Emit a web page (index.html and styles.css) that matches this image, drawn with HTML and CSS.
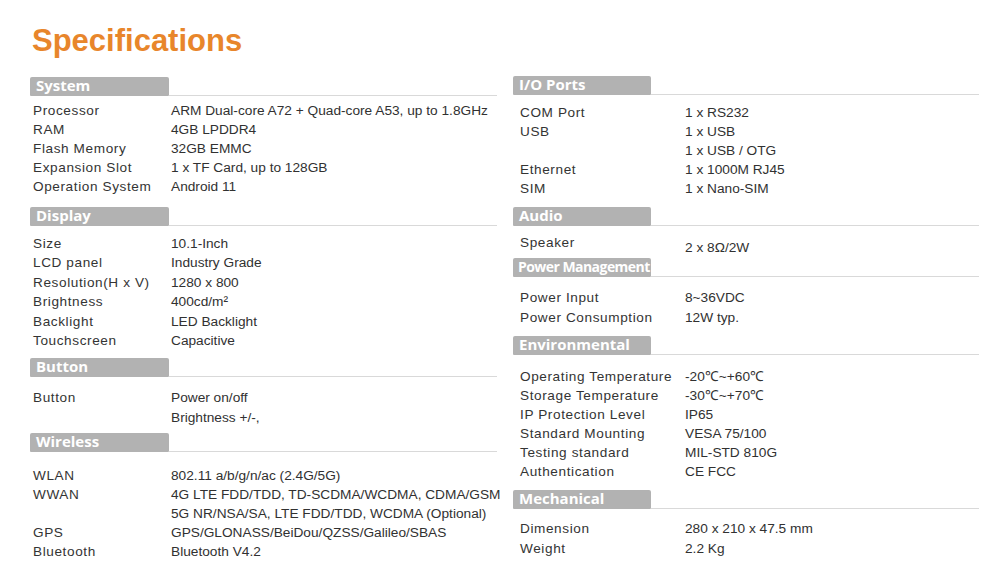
FILE: index.html
```html
<!DOCTYPE html>
<html lang="en">
<head>
<meta charset="utf-8">
<title>Specifications</title>
<link rel="stylesheet" href="styles.css">
</head>
<body>
<main class="page">
  <h1 class="title">Specifications</h1>
  <div class="cols">
    <div class="col col-left">
      <section class="sec s-system">
        <div class="sec-head"><span class="tag">System</span><span class="rule"></span></div>
        <div class="rows">
          <div class="row"><span class="lbl">Processor</span><span class="val">ARM Dual-core A72 + Quad-core A53, up to 1.8GHz</span></div>
          <div class="row"><span class="lbl">RAM</span><span class="val">4GB LPDDR4</span></div>
          <div class="row"><span class="lbl">Flash Memory</span><span class="val">32GB EMMC</span></div>
          <div class="row"><span class="lbl">Expansion Slot</span><span class="val">1 x TF Card, up to 128GB</span></div>
          <div class="row"><span class="lbl">Operation System</span><span class="val">Android 11</span></div>
        </div>
      </section>
      <section class="sec s-display">
        <div class="sec-head"><span class="tag">Display</span><span class="rule"></span></div>
        <div class="rows">
          <div class="row"><span class="lbl">Size</span><span class="val">10.1-Inch</span></div>
          <div class="row"><span class="lbl">LCD panel</span><span class="val">Industry Grade</span></div>
          <div class="row"><span class="lbl">Resolution(H x V)</span><span class="val">1280 x 800</span></div>
          <div class="row"><span class="lbl">Brightness</span><span class="val">400cd/m²</span></div>
          <div class="row"><span class="lbl">Backlight</span><span class="val">LED Backlight</span></div>
          <div class="row"><span class="lbl">Touchscreen</span><span class="val">Capacitive</span></div>
        </div>
      </section>
      <section class="sec s-button">
        <div class="sec-head"><span class="tag">Button</span><span class="rule"></span></div>
        <div class="rows">
          <div class="row"><span class="lbl">Button</span><span class="val">Power on/off</span></div>
          <div class="row"><span class="lbl"></span><span class="val">Brightness +/-,</span></div>
        </div>
      </section>
      <section class="sec s-wireless">
        <div class="sec-head"><span class="tag">Wireless</span><span class="rule"></span></div>
        <div class="rows">
          <div class="row"><span class="lbl">WLAN</span><span class="val">802.11 a/b/g/n/ac (2.4G/5G)</span></div>
          <div class="row"><span class="lbl">WWAN</span><span class="val">4G LTE FDD/TDD, TD-SCDMA/WCDMA, CDMA/GSM</span></div>
          <div class="row"><span class="lbl"></span><span class="val">5G NR/NSA/SA, LTE FDD/TDD, WCDMA (Optional)</span></div>
          <div class="row"><span class="lbl">GPS</span><span class="val">GPS/GLONASS/BeiDou/QZSS/Galileo/SBAS</span></div>
          <div class="row"><span class="lbl">Bluetooth</span><span class="val">Bluetooth V4.2</span></div>
        </div>
      </section>
    </div>
    <div class="col col-right">
      <section class="sec s-io">
        <div class="sec-head"><span class="tag">I/O Ports</span><span class="rule"></span></div>
        <div class="rows">
          <div class="row"><span class="lbl">COM Port</span><span class="val">1 x RS232</span></div>
          <div class="row"><span class="lbl">USB</span><span class="val">1 x USB</span></div>
          <div class="row"><span class="lbl"></span><span class="val">1 x USB / OTG</span></div>
          <div class="row"><span class="lbl">Ethernet</span><span class="val">1 x 1000M RJ45</span></div>
          <div class="row"><span class="lbl">SIM</span><span class="val">1 x Nano-SIM</span></div>
        </div>
      </section>
      <section class="sec s-audio">
        <div class="sec-head"><span class="tag">Audio</span><span class="rule"></span></div>
        <div class="rows">
          <div class="row"><span class="lbl">Speaker</span><span class="val val-low">2 x 8Ω/2W</span></div>
        </div>
      </section>
      <section class="sec s-power">
        <div class="sec-head"><span class="tag tag-tight">Power Management</span><span class="rule"></span></div>
        <div class="rows">
          <div class="row"><span class="lbl">Power Input</span><span class="val">8~36VDC</span></div>
          <div class="row"><span class="lbl">Power Consumption</span><span class="val">12W typ.</span></div>
        </div>
      </section>
      <section class="sec s-env">
        <div class="sec-head"><span class="tag">Environmental</span><span class="rule"></span></div>
        <div class="rows">
          <div class="row"><span class="lbl">Operating Temperature</span><span class="val">-20℃~+60℃</span></div>
          <div class="row"><span class="lbl">Storage Temperature</span><span class="val">-30℃~+70℃</span></div>
          <div class="row"><span class="lbl">IP Protection Level</span><span class="val">IP65</span></div>
          <div class="row"><span class="lbl">Standard Mounting</span><span class="val">VESA 75/100</span></div>
          <div class="row"><span class="lbl">Testing standard</span><span class="val">MIL-STD 810G</span></div>
          <div class="row"><span class="lbl">Authentication</span><span class="val">CE FCC</span></div>
        </div>
      </section>
      <section class="sec s-mech">
        <div class="sec-head"><span class="tag">Mechanical</span><span class="rule"></span></div>
        <div class="rows">
          <div class="row"><span class="lbl">Dimension</span><span class="val">280 x 210 x 47.5 mm</span></div>
          <div class="row"><span class="lbl">Weight</span><span class="val">2.2 Kg</span></div>
        </div>
      </section>
    </div>
  </div>
</main>
</body>
</html>
```
FILE: styles.css
```css
* { box-sizing: border-box; }
html, body { margin: 0; padding: 0; background: #ffffff; }
body { font-family: "Liberation Sans", Arial, sans-serif; color: #343434; }

.page { padding: 23px 0 0 30px; width: 1000px; height: 581px; overflow: hidden; }

.title {
  margin: 0 0 17px 2px;
  font-family: "Liberation Sans", Arial, sans-serif;
  font-weight: 700;
  font-size: 31px;
  line-height: 36px;
  color: #e8862b;
}

.cols { display: grid; grid-template-columns: 467px 466px; column-gap: 16px; align-items: start; }
.col-left { padding-top: 1px; }

.sec-head { display: flex; align-items: flex-end; height: 19px; }
.tag {
  flex: 0 0 139px;
  height: 19px;
  padding-left: 6px;
  background: #b2b2b2;
  border-radius: 2px 2px 1px 1px;
  color: #ffffff;
  font-family: "Open Sans", "Noto Sans", sans-serif;
  font-weight: 700;
  font-size: 15px;
  line-height: 17px;
  white-space: nowrap;
}
.col-right .tag { flex-basis: 138px; }
.tag-tight { font-size: 14px; letter-spacing: -0.55px; padding-left: 5px; line-height: 18px; }
.rule { flex: 1 1 auto; height: 1px; background: #d9d9d9; }

.rows { display: flex; flex-direction: column; }
.row { display: grid; grid-template-columns: 138px 1fr; line-height: 19px; font-size: 13.6px; }
.col-left .row { padding-left: 3px; }
.col-right .row { grid-template-columns: 165px 1fr; padding-left: 7px; }
.lbl { letter-spacing: 0.6px; white-space: nowrap; color: #343434; }
.val { white-space: nowrap; color: #313131; font-size: 13.7px; }
.val-low { padding-top: 5px; }

/* left column vertical rhythm */
.s-system .rows { padding-top: 5px; }
.s-display { margin-top: 10.5px; }
.s-display .rows { padding-top: 8px; }
.s-display .row { line-height: 19.5px; }
.s-button { margin-top: 7px; }
.s-button .rows { padding-top: 11.5px; }
.s-button .row { line-height: 20px; }
.s-wireless { margin-top: 4.5px; }
.s-wireless .rows { padding-top: 14px; }

/* right column vertical rhythm */
.s-io .rows { padding-top: 7.5px; }
.s-audio { margin-top: 9.5px; }
.s-audio .rows { padding-top: 7px; }
.s-power { margin-top: 1px; }
.s-power .rows { padding-top: 10.5px; }
.s-power .row { line-height: 20px; }
.s-env { margin-top: 8.5px; }
.s-env .rows { padding-top: 11.5px; }
.s-mech { margin-top: 9.5px; }
.s-mech .rows { padding-top: 9.5px; }
.s-mech .row { line-height: 20px; }
```
